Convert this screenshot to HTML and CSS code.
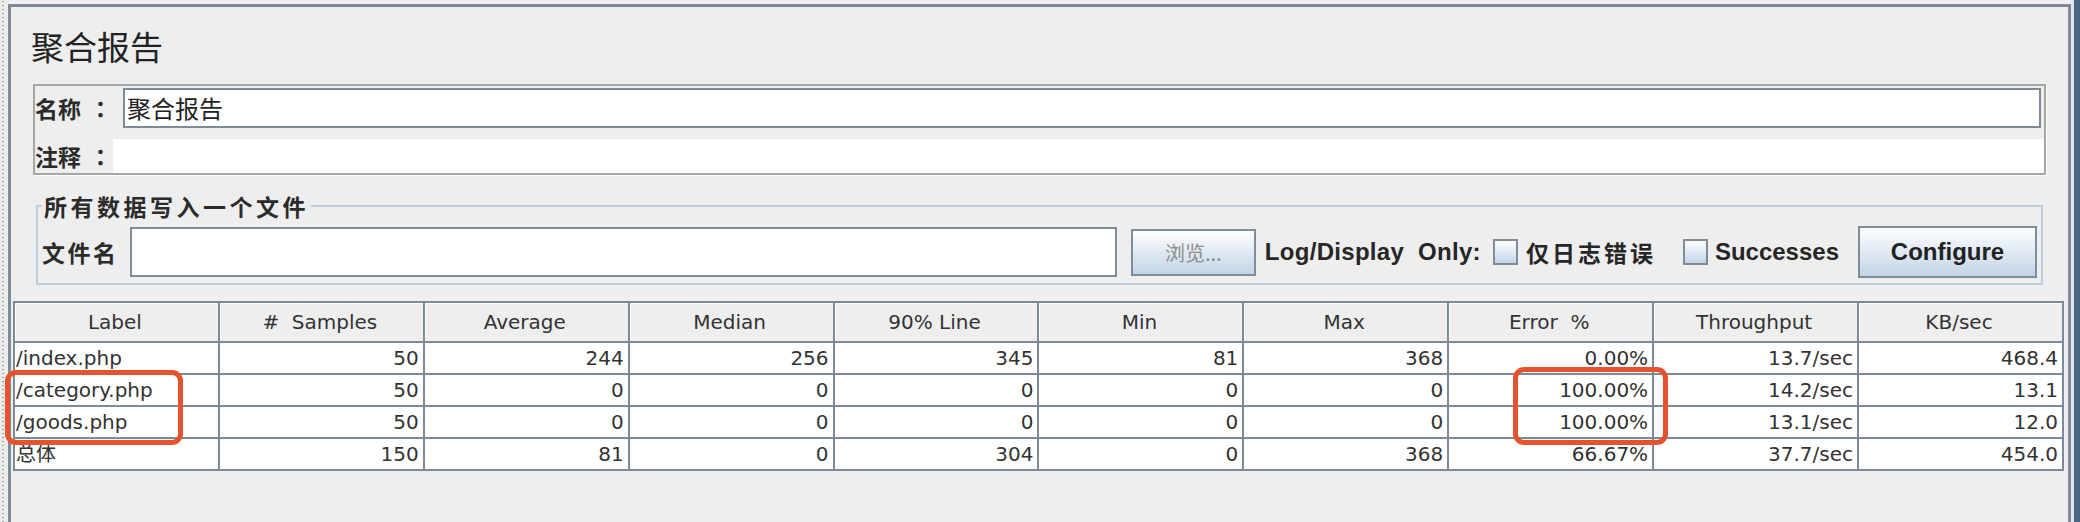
FILE: index.html
```html
<!DOCTYPE html>
<html lang="zh-CN">
<head>
<meta charset="utf-8">
<title>聚合报告</title>
<link rel="stylesheet" href="styles.css">
</head>
<body>
<div class="screen">
  <div class="strip"></div>
  <div class="frame">
    <h1 class="title">聚合报告</h1>
    <div class="namebox">
      <div class="row name-row">
        <span class="lbl name-lbl">名称<span class="colon">：</span></span>
        <div class="name-field">聚合报告</div>
      </div>
      <div class="row comment-row">
        <span class="lbl comment-lbl">注释<span class="colon">：</span></span>
        <div class="comment-field"></div>
      </div>
    </div>
    <fieldset class="filebox">
      <legend>所有数据写入一个文件</legend>
      <div class="file-row">
        <span class="file-lbl">文件名</span>
        <div class="file-field"></div>
        <button class="btn browse">浏览...</button>
        <span class="opt opt-log">Log/Display  Only:</span>
        <span class="check check-a"></span>
        <span class="opt opt-err">仅日志错误</span>
        <span class="check check-b"></span>
        <span class="opt opt-succ">Successes</span>
        <button class="btn configure">Configure</button>
      </div>
    </fieldset>
    <table class="report">
      <thead>
        <tr>
          <th>Label</th><th>#&nbsp; Samples</th><th>Average</th><th>Median</th><th>90% Line</th>
          <th>Min</th><th>Max</th><th>Error&nbsp; %</th><th>Throughput</th><th>KB/sec</th>
        </tr>
      </thead>
      <tbody>
        <tr>
          <td class="lab">/index.php</td><td>50</td><td>244</td><td>256</td><td>345</td>
          <td>81</td><td>368</td><td>0.00%</td><td>13.7/sec</td><td>468.4</td>
        </tr>
        <tr>
          <td class="lab">/category.php</td><td>50</td><td>0</td><td>0</td><td>0</td>
          <td>0</td><td>0</td><td>100.00%</td><td>14.2/sec</td><td>13.1</td>
        </tr>
        <tr>
          <td class="lab">/goods.php</td><td>50</td><td>0</td><td>0</td><td>0</td>
          <td>0</td><td>0</td><td>100.00%</td><td>13.1/sec</td><td>12.0</td>
        </tr>
        <tr>
          <td class="lab">总体</td><td>150</td><td>81</td><td>0</td><td>304</td>
          <td>0</td><td>368</td><td>66.67%</td><td>37.7/sec</td><td>454.0</td>
        </tr>
      </tbody>
    </table>
  </div>
  <div class="gap"></div>
  <div class="edge"></div>
  <div class="mark mark-a"></div>
  <div class="mark mark-b"></div>
</div>
</body>
</html>
```

FILE: styles.css
```css
html, body {
  margin: 0;
  padding: 0;
}

.screen {
  position: relative;
  display: flex;
  height: 522px;
  overflow: hidden;
  background: #f1eff1;
}

.strip {
  width: 8px;
  flex: none;
  background-color: #ececec;
  background-image: linear-gradient(#9c9c9c 1px, transparent 1px);
  background-size: 2px 4px;
  background-repeat: repeat-y;
  background-position: 2px 1px;
}

.frame {
  flex: 1;
  min-width: 0;
  margin-top: 4px;
  border: 3px solid #7d8a98;
  border-bottom: 0;
  background: #eeeeee;
}

.gap {
  width: 3px;
  flex: none;
  background: #e4e8ec;
}

.edge {
  width: 6px;
  flex: none;
  background: #4a6784;
}

.title {
  margin: 21px 0 0 20px;
  font: 400 33px/36px "Noto Sans CJK SC", sans-serif;
  color: #222;
}

.namebox {
  margin: 20px 22px 0;
  border: 2px solid #a6a6a6;
  box-shadow: 1px 1px 0 #ffffff;
}

.row {
  display: flex;
  align-items: center;
}

.name-row {
  padding-top: 2px;
  height: 40px;
}

.comment-row {
  margin-top: 11px;
  height: 34px;
}

.lbl {
  flex: none;
  font: 700 23px/1 "Noto Sans CJK SC", sans-serif;
  color: #2b2b2b;
  text-spacing-trim: space-all;
}

.colon {
  display: inline-block;
  margin-left: 8px;
  font-family: "Noto Sans CJK TC", sans-serif;
}

.name-lbl {
  width: 88px;
}

.comment-lbl {
  width: 78px;
}

.name-field {
  flex: 1;
  height: 40px;
  box-sizing: border-box;
  border: 2px solid #7f8b97;
  background: #ffffff;
  margin-right: 3px;
  padding-left: 2px;
  font: 400 24px/36px "Noto Sans CJK SC", sans-serif;
  color: #222;
}

.comment-field {
  flex: 1;
  align-self: stretch;
  background: #ffffff;
}

.filebox {
  margin: 18px 25px 0;
  padding: 7px 4px 5px;
  border: 2px solid #bfcddb;
  min-width: 0;
}

.filebox legend {
  padding: 0 2px;
  font: 700 23px/26px "Noto Sans CJK SC", sans-serif;
  letter-spacing: 3.5px;
  color: #2b2b2b;
}

.file-row {
  display: flex;
  align-items: center;
  height: 52px;
}

.file-lbl {
  flex: none;
  width: 88px;
  font: 700 23px/1 "Noto Sans CJK SC", sans-serif;
  letter-spacing: 2.5px;
  color: #2b2b2b;
}

.file-field {
  flex: 1;
  height: 50px;
  box-sizing: border-box;
  border: 2px solid #7f8b97;
  background: #ffffff;
  margin-right: 14px;
}

.btn {
  flex: none;
  box-sizing: border-box;
  padding: 0;
  border: 2px solid #7f8c9a;
  background: linear-gradient(#fdfeff, #c3d4e6);
}

.browse {
  width: 125px;
  height: 47px;
  margin-right: 9px;
  font: 400 20px "Noto Sans CJK SC", sans-serif;
  color: #8d8d8d;
}

.configure {
  width: 179px;
  height: 52px;
  font: 700 24px "Liberation Sans", sans-serif;
  color: #222;
}

.opt {
  flex: none;
  white-space: pre;
  font: 700 24px "Liberation Sans", "Noto Sans CJK SC", sans-serif;
  color: #262626;
}

.opt-log {
  margin-right: 12px;
  letter-spacing: 0.3px;
}

.opt-err {
  margin-right: 27px;
  font: 700 23px "Noto Sans CJK SC", sans-serif;
  letter-spacing: 3px;
}

.opt-succ {
  margin-right: 19px;
}

.check {
  flex: none;
  width: 25px;
  height: 26px;
  box-sizing: border-box;
  border: 2px solid #7f8c9a;
  background: linear-gradient(#ffffff, #c3d4e6);
}

.check-a {
  margin-right: 8px;
}

.check-b {
  margin-right: 7px;
}

.report {
  margin: 16px 4px 0 2px;
  width: calc(100% - 6px);
  border-collapse: separate;
  border-spacing: 0;
  table-layout: fixed;
  border-top: 2px solid #7d8b98;
  border-left: 2px solid #7d8b98;
  font: 400 20px "DejaVu Sans", "Noto Sans CJK SC", sans-serif;
  color: #333;
}

.report th,
.report td {
  border-right: 2px solid #7d8b98;
  border-bottom: 2px solid #7d8b98;
  padding: 0 4px 0 1px;
  white-space: nowrap;
  overflow: hidden;
}

.report th {
  line-height: 38px;
  font-weight: 400;
  background: #eeeeee;
  text-align: center;
  box-shadow: inset 1px 1px 0 #ffffff;
}

.report td {
  line-height: 30px;
  background: #ffffff;
  text-align: right;
}

.report td.lab {
  text-align: left;
}

.mark {
  position: absolute;
  box-sizing: border-box;
  border: 5px solid #e4522e;
  border-radius: 11px;
}

.mark-a {
  left: 5px;
  top: 370px;
  width: 178px;
  height: 75px;
}

.mark-b {
  left: 1513px;
  top: 367px;
  width: 155px;
  height: 78px;
}
```
